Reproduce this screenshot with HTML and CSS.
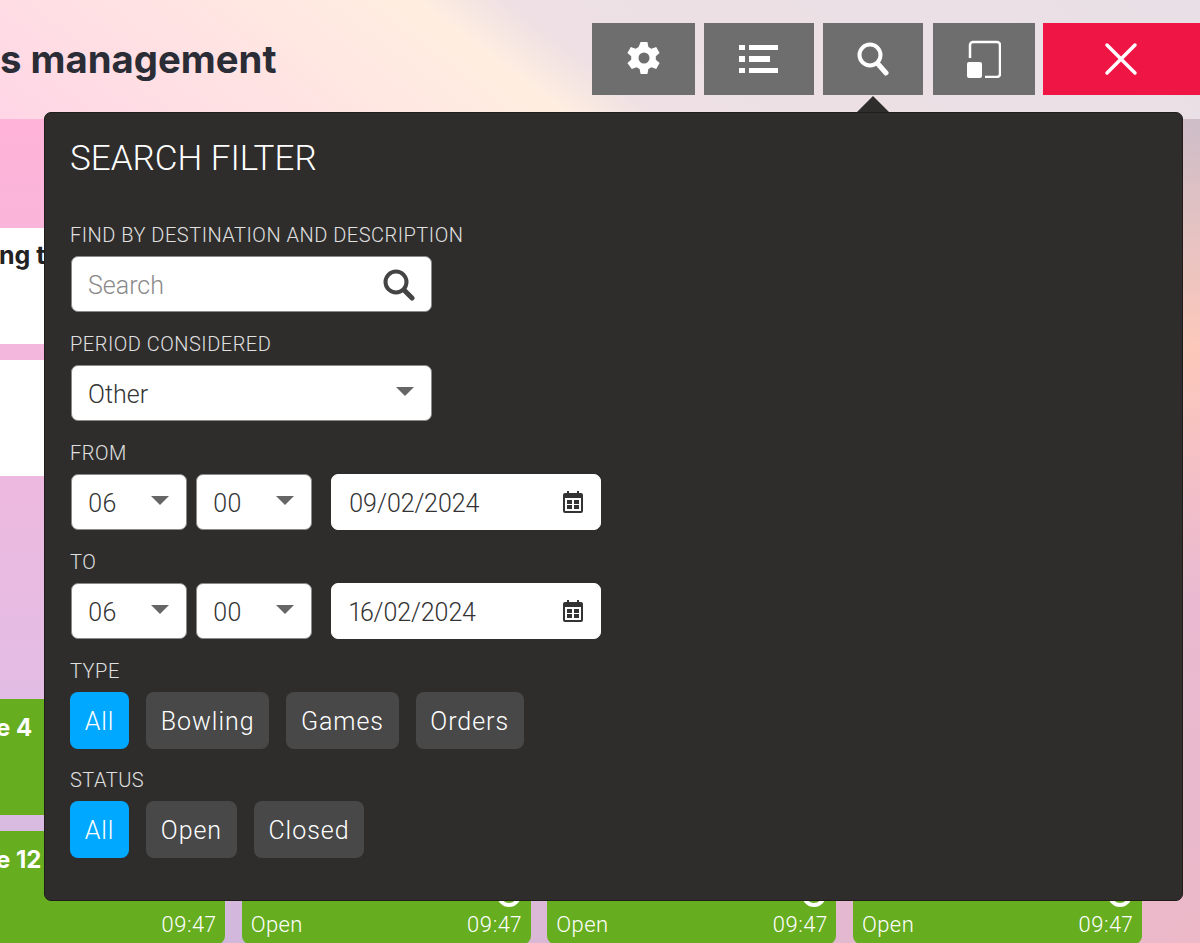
FILE: index.html
```html
<!DOCTYPE html>
<html lang="en">
<head>
<meta charset="utf-8">
<title>Tickets management</title>
<link rel="stylesheet" href="styles.css">
</head>
<body>
<div class="app">
  <header class="topbar">
    <h1 class="page-title">s management</h1>
    <nav class="tools">
      <button class="tool tool-gear"><svg width="36" height="40" viewBox="0 0 36 40"><path fill="#fff" fill-rule="evenodd" d="M14.6 3h6.8l1 5 3 1.700 4.800-1.600 3.400 5.800-3.800 3.400v3.400l3.800 3.400-3.400 5.800-4.800-1.600-3 1.700-1 5h-6.800l-1-5-3-1.700-4.800 1.600L1.400 24.100l3.800-3.400v-3.400L1.400 13.900l3.400-5.800 4.800 1.600 3-1.700zM18 13.500a5.500 5.500 0 1 0 0 11 5.500 5.500 0 0 0 0-11z"/></svg></button>
      <button class="tool tool-list"><svg width="40" height="30" viewBox="0 0 40 30"><g fill="#fff"><rect x="0" y="1" width="6" height="5"/><rect x="0" y="12" width="6" height="6"/><rect x="0" y="24" width="6" height="5"/><rect x="10" y="1" width="29" height="5"/><rect x="10" y="12" width="21" height="6"/><rect x="10" y="24" width="29" height="5"/></g></svg></button>
      <button class="tool tool-search"><svg width="32" height="36" viewBox="0 0 32 36"><g fill="none" stroke="#fff" stroke-width="4"><circle cx="13" cy="14" r="10.500"/><path stroke-linecap="round" stroke-width="5" d="M21 23l8 9"/></g></svg></button>
      <button class="tool tool-window"><svg width="34" height="38" viewBox="0 0 34 38"><path fill="none" stroke="#fff" stroke-width="2.500" d="M3 18V5a3 3 0 0 1 3-3h24a3 3 0 0 1 3 3v29a3 3 0 0 1-3 3H18"/><rect x="0" y="22" width="15" height="16" rx="2" fill="#fff"/></svg></button>
      <button class="tool tool-close"><svg width="34" height="34" viewBox="0 0 34 34"><path stroke="#fff" stroke-width="3.500" stroke-linecap="round" d="M3 3l28 28M31 3L3 31"/></svg></button>
    </nav>
  </header>

  <main class="board">
    <section class="col">
      <article class="card card-white"><strong class="card-title dark">ng t</strong></article>
      <article class="card card-white"></article>
      <div class="col-gap"></div>
      <article class="card card-green"><strong class="card-title">e 4</strong></article>
      <article class="card card-green"><strong class="card-title">e 12</strong><div class="card-foot"><span>Open</span><span>09:47</span></div></article>
    </section>
    <section class="col col-bottom">
      <article class="card card-green"><span class="ring"></span><div class="card-foot"><span>Open</span><span>09:47</span></div></article>
    </section>
    <section class="col col-bottom">
      <article class="card card-green"><span class="ring"></span><div class="card-foot"><span>Open</span><span>09:47</span></div></article>
    </section>
    <section class="col col-bottom">
      <article class="card card-green"><span class="ring"></span><div class="card-foot"><span>Open</span><span>09:47</span></div></article>
    </section>
  </main>

  <aside class="filter">
    <span class="filter-arrow"></span>
    <h2 class="filter-title">SEARCH FILTER</h2>

    <div class="group">
      <div class="label">FIND BY DESTINATION AND DESCRIPTION</div>
      <div class="row">
        <div class="field field-wide"><span class="placeholder">Search</span>
          <svg class="field-icon" width="32" height="32" viewBox="0 0 32 32"><g fill="none" stroke="#444"><circle cx="13" cy="13" r="10.500" stroke-width="4"/><path stroke-width="5" stroke-linecap="round" d="M21 21l8 8"/></g></svg>
        </div>
      </div>
    </div>

    <div class="group">
      <div class="label">PERIOD CONSIDERED</div>
      <div class="row">
        <div class="field field-wide"><span>Other</span><i class="caret"></i></div>
      </div>
    </div>

    <div class="group">
      <div class="label">FROM</div>
      <div class="row">
        <div class="field field-hour"><span>06</span><i class="caret"></i></div>
        <div class="field field-min"><span>00</span><i class="caret"></i></div>
        <div class="field field-date"><span>09/02/2024</span>
          <svg class="cal" width="20" height="22" viewBox="0 0 20 22"><path fill="#333" fill-rule="evenodd" d="M4 0h2v2h8V0h2v2h2a2 2 0 0 1 2 2v16a2 2 0 0 1-2 2H2a2 2 0 0 1-2-2V4a2 2 0 0 1 2-2h2zM2 7v13h16V7zM4 9h5v4H4zm7 0h5v4h-5zm-7 5h5v4H4zm7 0h5v4h-5z"/></svg>
        </div>
      </div>
    </div>

    <div class="group">
      <div class="label">TO</div>
      <div class="row">
        <div class="field field-hour"><span>06</span><i class="caret"></i></div>
        <div class="field field-min"><span>00</span><i class="caret"></i></div>
        <div class="field field-date"><span>16/02/2024</span>
          <svg class="cal" width="20" height="22" viewBox="0 0 20 22"><path fill="#333" fill-rule="evenodd" d="M4 0h2v2h8V0h2v2h2a2 2 0 0 1 2 2v16a2 2 0 0 1-2 2H2a2 2 0 0 1-2-2V4a2 2 0 0 1 2-2h2zM2 7v13h16V7zM4 9h5v4H4zm7 0h5v4h-5zm-7 5h5v4H4zm7 0h5v4h-5z"/></svg>
        </div>
      </div>
    </div>

    <div class="group">
      <div class="label">TYPE</div>
      <div class="chips">
        <button class="chip chip-on">All</button>
        <button class="chip">Bowling</button>
        <button class="chip">Games</button>
        <button class="chip">Orders</button>
      </div>
    </div>

    <div class="group">
      <div class="label">STATUS</div>
      <div class="chips">
        <button class="chip chip-on">All</button>
        <button class="chip">Open</button>
        <button class="chip">Closed</button>
      </div>
    </div>
  </aside>
</div>
</body>
</html>
```

FILE: styles.css
```css
* { box-sizing: border-box; }
html, body { margin: 0; padding: 0; height: 100%; overflow: hidden; }
body { font-family: Roboto, "Liberation Sans", sans-serif; font-variant-numeric: proportional-nums; }

.app {
  position: relative;
  width: 1200px;
  height: 943px;
  overflow: hidden;
  background:
    radial-gradient(circle at 1200px 119px, #cdbdc8 0, #fec8bc 230px, rgba(254, 200, 188, 0) 480px),
    radial-gradient(circle at 1200px 943px, #edb9c9 0, rgba(237, 185, 201, 0) 1000px),
    linear-gradient(to bottom, #ffb3d8 119px, #e2bce4 700px, #d0b8dc 943px);
}

.topbar {
  height: 119px;
  display: flex;
  align-items: flex-start;
  justify-content: space-between;
  background: linear-gradient(37deg, #ffd6e6 0%, #ffeee0 42%, #eee0e4 49%, #e8e0e6 100%);
}
.page-title {
  margin: 37px 0 0;
  font-size: 38.300px;
  line-height: 44px;
  font-weight: 700;
  font-family: Inter, Roboto, sans-serif;
  color: #2b2d36;
}
.tools { display: flex; margin-top: 23px; }
.tool {
  height: 72px;
  border: 0;
  padding: 0;
  background: #6e6e6e;
  display: flex;
  align-items: center;
  justify-content: center;
}
.tool-gear { width: 103px; margin-right: 9px; }
.tool-list { width: 110px; margin-right: 9px; }
.tool-search { width: 100px; margin-right: 10px; }
.tool-window { width: 102px; margin-right: 8px; }
.tool-close { width: 157px; background: #ef1646; padding-right: 2px; }

.board {
  display: grid;
  grid-template-columns: repeat(4, 289px);
  column-gap: 16.670px;
  margin-left: -64px;
  height: 824px;
}
.col { display: flex; flex-direction: column; gap: 16px; padding-top: 109px; }
.col-bottom { padding-top: 712px; }
.col-gap { height: 191px; flex: none; }
.card {
  position: relative;
  height: 116px;
  flex: none;
  border-radius: 6px;
  padding: 14px 9px 0;
}
.card:last-child { height: 113px; border-radius: 8px; }
.card-white { background: #fff; }
.card-green { background: #66ad1f; color: #fff; }
.card-title {
  display: block;
  font-family: Inter, Roboto, sans-serif;
  font-size: 24px;
  line-height: 30px;
  font-weight: 700;
  margin-left: 51px;
}
.card-title.dark { color: #222; margin-top: -2px; margin-left: 54px; font-size: 25px; }
.card-foot {
  position: absolute;
  left: 9px;
  right: 9px;
  top: 81px;
  display: flex;
  justify-content: space-between;
  font-size: 22px;
  line-height: 26px;
  font-weight: 300;
  letter-spacing: 0.4px;
}
.ring {
  position: absolute;
  top: 52px;
  right: 10px;
  width: 24px;
  height: 24px;
  border-radius: 50%;
  border: 4px solid #fff;
}

.filter {
  position: absolute;
  left: 44px;
  top: 112px;
  width: 1139px;
  height: 789px;
  background: #2e2d2c;
  border: 1px solid #1e1d1c;
  border-radius: 7px;
  padding: 26px 25px 0;
  color: #fff;
}
.filter-arrow {
  position: absolute;
  left: 812px;
  top: -17px;
  width: 0;
  height: 0;
  border-left: 16px solid transparent;
  border-right: 16px solid transparent;
  border-bottom: 16px solid #2e2d2c;
}
.filter-title {
  margin: 0 0 43px;
  font-size: 35px;
  line-height: 40px;
  font-weight: 300;
}
.group { height: 109px; }
.label {
  font-size: 20px;
  line-height: 26px;
  font-weight: 300;
  letter-spacing: 0.5px;
  color: #e0e0e0;
  margin-bottom: 8px;
}
.row { display: flex; }
.field {
  height: 56px;
  background: #fff;
  border-radius: 7px;
  border: 1px solid #8a8a8a;
  display: flex;
  align-items: center;
  justify-content: space-between;
  padding: 2px 24px 0 16px;
  font-size: 25px;
  font-weight: 300;
  color: #333;
}
.field-wide { width: 361px; margin-left: 1px; }
.field-wide .caret { margin-right: -7px; }
.field-hour { width: 116px; margin-left: 1px; margin-right: 9px; }
.field-min { width: 116px; margin-right: 19px; }
.field-date { width: 270px; padding-right: 17px; padding-left: 17px; border-color: #fff; letter-spacing: -0.25px; }
.placeholder { color: #8a8a8a; }
.field-icon { margin-right: -8px; }
.caret {
  width: 0;
  height: 0;
  border-left: 9px solid transparent;
  border-right: 9px solid transparent;
  border-top: 9px solid #666;
  margin-top: -5px;
}
.field-hour .caret, .field-min .caret { margin-right: -7px; }
.cal { margin-top: -2px; }
.chips { display: flex; gap: 17px; }
.chip {
  height: 57px;
  border: 0;
  border-radius: 8px;
  padding: 2px 14.700px 0;
  background: #484848;
  color: #fff;
  font-family: inherit;
  font-size: 25px;
  font-weight: 300;
  letter-spacing: 0.95px;
}
.chip-on { background: #00a8ff; }
```
